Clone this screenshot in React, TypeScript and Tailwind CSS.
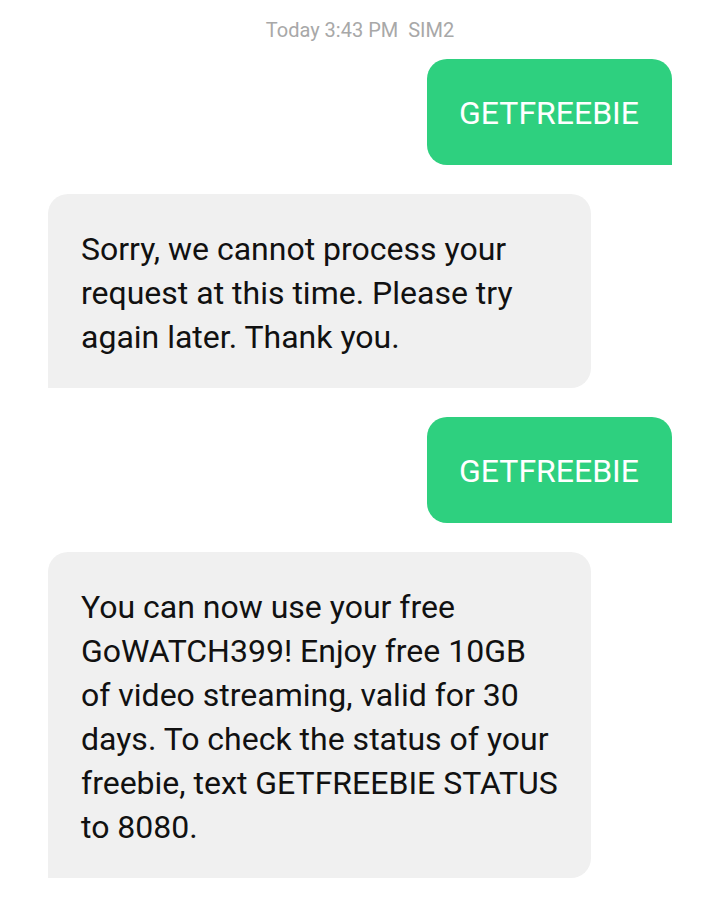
const messages: { from: "me" | "them"; text: string }[] = [
  { from: "me", text: "GETFREEBIE" },
  {
    from: "them",
    text: "Sorry, we cannot process your request at this time. Please try again later. Thank you.",
  },
  { from: "me", text: "GETFREEBIE" },
  {
    from: "them",
    text: "You can now use your free GoWATCH399! Enjoy free 10GB of video streaming, valid for 30 days. To check the status of your freebie, text GETFREEBIE STATUS to 8080.",
  },
];

function Bubble({ from, text }: { from: "me" | "them"; text: string }) {
  if (from === "me") {
    return (
      <div className="flex justify-end">
        <div className="bg-[#2ed07f] text-white rounded-[20px] rounded-br-none pl-[32px] pr-[33px] pt-[32px] pb-[30px] text-[32px] leading-[44px]">
          {text}
        </div>
      </div>
    );
  }
  return (
    <div className="flex justify-start">
      <div className="w-[543px] bg-[#f0f0f0] text-[#111] rounded-[20px] rounded-bl-none pl-[33px] pr-[33px] pt-[33px] pb-[29px] text-[32px] leading-[44px]">
        {text}
      </div>
    </div>
  );
}

export default function App() {
  return (
    <div
      className="w-[720px] h-[914px] bg-white overflow-hidden px-[48px]"
      style={{ fontFamily: "Roboto, 'Liberation Sans', sans-serif" }}
    >
      <p className="text-center text-[20px] leading-[24px] text-[#a8a8a8] pt-[18px] pb-[17px]">
        Today 3:43 PM&nbsp;&nbsp;SIM2
      </p>
      <div className="flex flex-col gap-[29px]">
        {messages.map((m, i) => (
          <Bubble key={i} from={m.from} text={m.text} />
        ))}
      </div>
    </div>
  );
}
